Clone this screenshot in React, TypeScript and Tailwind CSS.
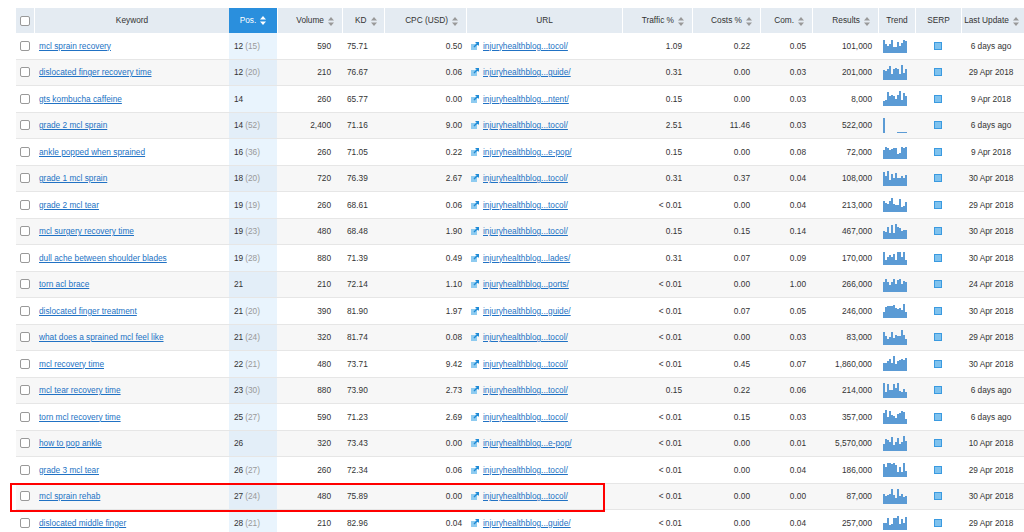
import React from "react";

const rows: [string, string, string, string, string, string, string, string, string, string, string, string][] = [
  ["mcl sprain recovery", "12", "15", "590", "75.71", "0.50", "tocol/", "1.09", "0.22", "0.05", "101,000", "6 days ago"],
  ["dislocated finger recovery time", "12", "20", "210", "76.67", "0.06", "guide/", "0.31", "0.00", "0.03", "201,000", "29 Apr 2018"],
  ["gts kombucha caffeine", "14", "", "260", "65.77", "0.00", "ntent/", "0.15", "0.00", "0.03", "8,000", "9 Apr 2018"],
  ["grade 2 mcl sprain", "14", "52", "2,400", "71.16", "9.00", "tocol/", "2.51", "11.46", "0.03", "522,000", "6 days ago"],
  ["ankle popped when sprained", "16", "36", "260", "71.05", "0.22", "e-pop/", "0.15", "0.00", "0.08", "72,000", "9 Apr 2018"],
  ["grade 1 mcl sprain", "18", "20", "720", "76.39", "2.67", "tocol/", "0.31", "0.37", "0.04", "108,000", "30 Apr 2018"],
  ["grade 2 mcl tear", "19", "19", "260", "68.61", "0.06", "tocol/", "< 0.01", "0.00", "0.04", "213,000", "29 Apr 2018"],
  ["mcl surgery recovery time", "19", "23", "480", "68.48", "1.90", "tocol/", "0.15", "0.15", "0.14", "467,000", "30 Apr 2018"],
  ["dull ache between shoulder blades", "19", "28", "880", "71.39", "0.49", "lades/", "0.31", "0.07", "0.09", "170,000", "30 Apr 2018"],
  ["torn acl brace", "21", "", "210", "72.14", "1.10", "ports/", "< 0.01", "0.00", "1.00", "266,000", "24 Apr 2018"],
  ["dislocated finger treatment", "21", "20", "390", "81.90", "1.97", "guide/", "< 0.01", "0.07", "0.05", "246,000", "30 Apr 2018"],
  ["what does a sprained mcl feel like", "21", "24", "320", "81.74", "0.08", "tocol/", "< 0.01", "0.00", "0.03", "83,000", "29 Apr 2018"],
  ["mcl recovery time", "22", "21", "480", "73.71", "9.42", "tocol/", "< 0.01", "0.45", "0.07", "1,860,000", "30 Apr 2018"],
  ["mcl tear recovery time", "23", "30", "880", "73.90", "2.73", "tocol/", "0.15", "0.22", "0.06", "214,000", "6 days ago"],
  ["torn mcl recovery time", "25", "27", "590", "71.23", "2.69", "tocol/", "< 0.01", "0.15", "0.03", "357,000", "6 days ago"],
  ["how to pop ankle", "26", "", "320", "73.43", "0.00", "e-pop/", "< 0.01", "0.00", "0.01", "5,570,000", "10 Apr 2018"],
  ["grade 3 mcl tear", "26", "27", "260", "72.34", "0.06", "tocol/", "< 0.01", "0.00", "0.04", "186,000", "29 Apr 2018"],
  ["mcl sprain rehab", "27", "24", "480", "75.89", "0.00", "tocol/", "< 0.01", "0.00", "0.00", "87,000", "30 Apr 2018"],
  ["dislocated middle finger", "28", "21", "210", "82.96", "0.04", "guide/", "< 0.01", "0.00", "0.04", "257,000", "29 Apr 2018"],
];

function bars(i: number) {
  const out: number[] = [];
  let s = i * 7919 + 13;
  for (let k = 0; k < 12; k++) {
    s = (s * 1103515245 + 12345) % 2147483648;
    out.push(35 + ((s >> 8) % 66));
  }
  if (i === 3) return [100, 0, 0, 0, 0, 0, 0, 8, 8, 8, 8, 8];
  return out;
}

const Sort = () => (
  <svg width="6" height="9" viewBox="0 0 6 9" className="inline-block ml-1">
    <path d="M3 0 L6 3.5 H0Z M3 9 L6 5.5 H0Z" fill="currentColor" />
  </svg>
);

const Box = () => <span className="inline-block w-[10px] h-[10px] border border-[#999] rounded-[2px] bg-white" />;

const cols = "grid grid-cols-[18px_195px_48px_65px_42px_82px_156px_70px_68px_52px_66px_37px_46px_60px]";

export default function App() {
  return (
    <div className="w-[1024px] h-[532px] bg-white overflow-hidden relative pt-[8px] pl-[16px] text-[8.3px] text-[#333]" style={{ fontFamily: "'Liberation Sans', Arial, sans-serif" }}>
      <div className={`${cols} h-[25px] bg-[#e4ebf2] items-center text-[#333]`}>
        <div className="flex justify-center"><Box /></div>
        <div className="text-center border-l border-white h-full flex items-center justify-center">Keyword</div>
        <div className="bg-[#2a8fdd] text-white h-full flex items-center justify-center">Pos.<Sort /></div>
        <div className="text-right pr-2 h-full flex items-center justify-end border-l border-white">Volume<span className="text-[#999]"><Sort /></span></div>
        <div className="h-full flex items-center pl-3 border-l border-white">KD<span className="text-[#999]"><Sort /></span></div>
        <div className="h-full flex items-center justify-end pr-2 border-l border-white">CPC (USD)<span className="text-[#999]"><Sort /></span></div>
        <div className="h-full flex items-center justify-center border-l border-white">URL</div>
        <div className="h-full flex items-center justify-end pr-2 border-l border-white">Traffic %<span className="text-[#999]"><Sort /></span></div>
        <div className="h-full flex items-center justify-end pr-2 border-l border-white">Costs %<span className="text-[#999]"><Sort /></span></div>
        <div className="h-full flex items-center justify-end pr-2 border-l border-white">Com.<span className="text-[#999]"><Sort /></span></div>
        <div className="h-full flex items-center justify-end pr-2 border-l border-white">Results<span className="text-[#999]"><Sort /></span></div>
        <div className="h-full flex items-center justify-center border-l border-white">Trend</div>
        <div className="h-full flex items-center justify-center border-l border-white">SERP</div>
        <div className="h-full flex items-center justify-center border-l border-white">Last Update<span className="text-[#999]"><Sort /></span></div>
      </div>
      {rows.map((r, i) => (
        <div key={i} className={`${cols} h-[26.5px] items-center border-b border-[#e6e6e6] ${i % 2 ? "bg-[#f7f7f7]" : "bg-white"}`}>
          <div className="flex justify-center"><Box /></div>
          <div className="pl-[5px]"><span className="text-[#2172c4] underline">{r[0]}</span></div>
          <div className={`h-full flex items-center pl-[5px] ${i % 2 ? "bg-[#e3eef8]" : "bg-[#e9f4fd]"}`}>{r[1]}{r[2] && <span className="text-[#999] ml-[2px]">({r[2]})</span>}</div>
          <div className="text-right pr-[11px]">{r[3]}</div>
          <div className="pl-[5px]">{r[4]}</div>
          <div className="text-right pr-[4px]">{r[5]}</div>
          <div className="flex items-center gap-[4px] pl-[5px]">
            <svg width="8" height="8" viewBox="0 0 8 8"><rect x="0" y="2" width="6" height="6" fill="#8ecbf0" /><path d="M3 5 L7.5 0.5 M4.5 0.5 H7.5 V3.5" stroke="#1e8ad6" strokeWidth="1.4" fill="none" /></svg>
            <span className="text-[#2172c4] underline">injuryhealthblog...{r[6]}</span>
          </div>
          <div className="text-right pr-[10px]">{r[7]}</div>
          <div className="text-right pr-[10px]">{r[8]}</div>
          <div className="text-right pr-[6px]">{r[9]}</div>
          <div className="text-right pr-[6px]">{r[10]}</div>
          <div className="flex items-end h-[15px] gap-0 pl-[5px]">
            {bars(i).map((h, k) => (
              <div key={k} className="w-[2px] bg-[#5b9bd5]" style={{ height: `${h}%` }} />
            ))}
          </div>
          <div className="flex justify-center"><span className="inline-block w-[8px] h-[8px] bg-[#7fc2ee] border border-[#3a9ae0]" /></div>
          <div className="text-center">{r[11]}</div>
        </div>
      ))}
      <div className="absolute left-[10px] top-[483px] w-[595px] h-[29px] border-2 border-[#f00]" />
    </div>
  );
}
